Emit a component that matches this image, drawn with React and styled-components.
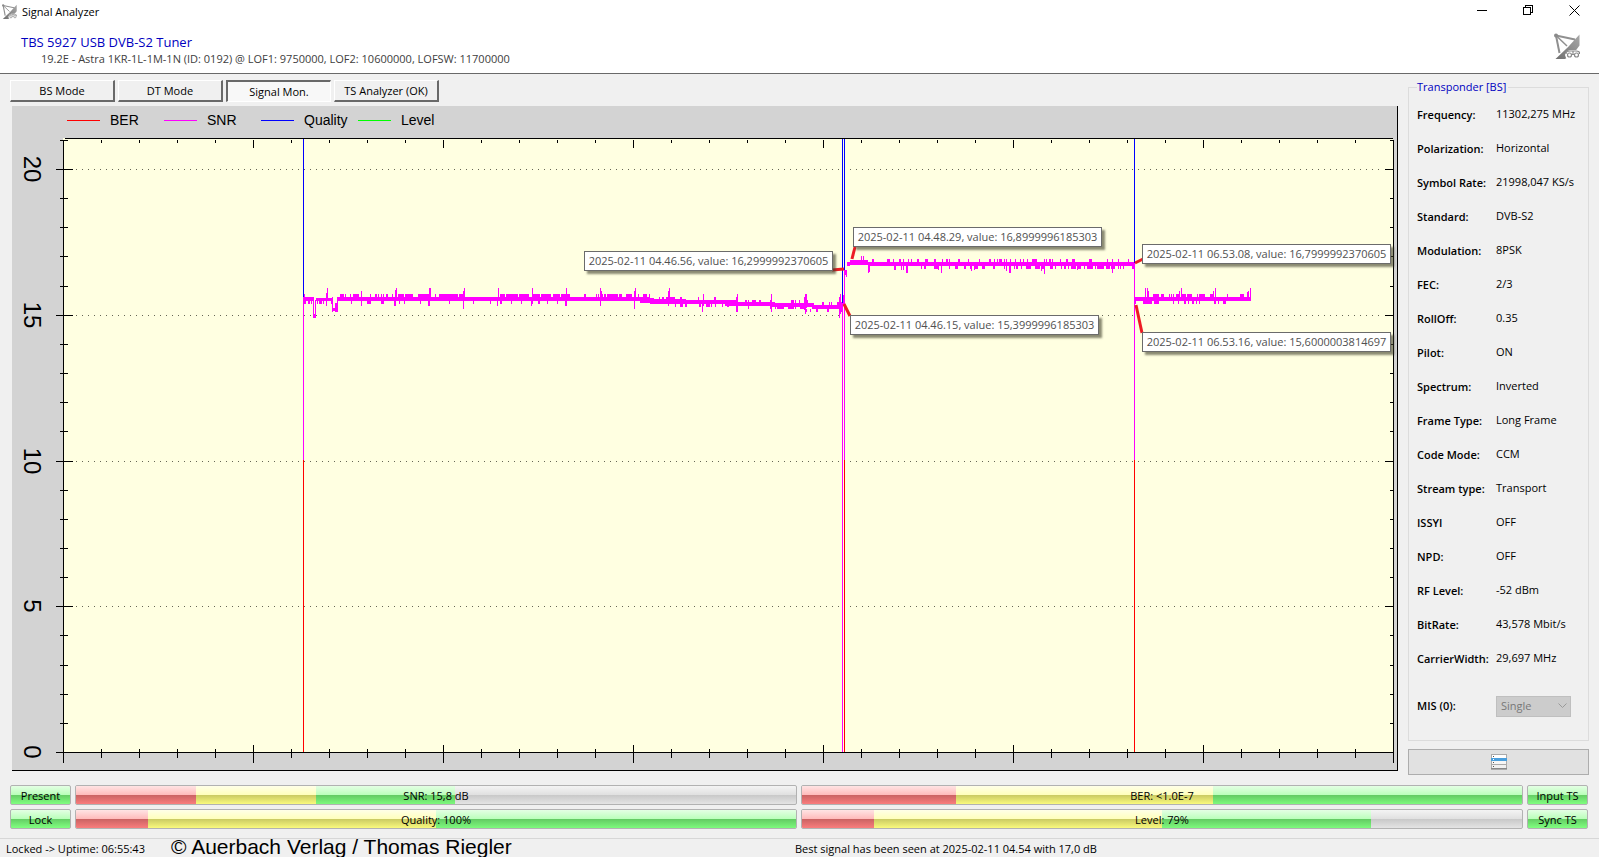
import React from "react";
import styled, { createGlobalStyle } from "styled-components";

const GlobalStyle = createGlobalStyle`
  *, *::before, *::after { box-sizing: border-box; }
  body {
    margin: 0;
    background: #f0f0f0;
    color: #000;
    font: 11px/14px "Open Sans", "Noto Sans", sans-serif;
  }
  button, select { font: inherit; color: inherit; }
`;

const Page = styled.div`
  display: flex;
  flex-direction: column;
  height: 100vh;
  min-height: 760px;
`;

/* ---------- header ---------- */

const Header = styled.header`
  flex: none;
  height: 74px;
  background: #fff;
  border-bottom: 1px solid #696969;
`;

const TitleBar = styled.div`
  display: flex;
  align-items: center;
  height: 22px;
  padding-left: 2px;
  gap: 5px;
`;

const WindowTitle = styled.span`
  flex: 1;
  padding-top: 1px;
`;

const WindowButton = styled.button`
  display: flex;
  align-items: center;
  justify-content: center;
  width: 46px;
  height: 20px;
  padding: 0;
  border: 0;
  background: none;
`;

const WindowButtons = styled.div`
  display: flex;
  align-self: flex-start;
  padding-right: 2px;
`;

const DeviceRow = styled.div`
  display: flex;
  justify-content: space-between;
  align-items: flex-start;
  padding: 11px 19px 0 21px;
`;

const DeviceName = styled.h1`
  margin: 0;
  color: #0000c0;
  font-size: 13px;
  line-height: 18px;
  font-weight: 500;
`;

const DeviceDetail = styled.p`
  margin: 0;
  padding-left: 20px;
  color: #404040;
  line-height: 16px;
`;

/* ---------- main area ---------- */

const Main = styled.main`
  display: flex;
  flex: 1;
  min-height: 0;
  gap: 10px;
  padding: 6px 10px 0;
`;

const MonitorColumn = styled.div`
  display: flex;
  flex-direction: column;
  flex: 1;
  min-width: 0;
  gap: 4px;
  padding-bottom: 4px;
`;

const Tabs = styled.nav`
  display: flex;
  gap: 3px;
`;

const Tab = styled.button`
  width: 105px;
  height: 22px;
  padding: 0;
  border-style: solid;
  border-width: ${(p) => (p.$active ? "2px 1px 1px 2px" : "1px 2px 2px 1px")};
  border-color: ${(p) => (p.$active ? "#696969 #fff #fff #696969" : "#fff #696969 #696969 #fff")};
  background: ${(p) => (p.$active ? "#f8f8f8" : "#f0f0f0")};
  line-height: 14px;
`;

const ChartPanel = styled.section`
  display: flex;
  flex-direction: column;
  flex: 1;
  min-height: 0;
  margin-left: 2px;
  border-right: 1px solid #000;
  border-bottom: 1px solid #000;
  background: #d3d3d3;
`;

const Legend = styled.ul`
  display: flex;
  flex: none;
  height: 28px;
  margin: 0;
  padding: 0 0 0 55px;
  list-style: none;
  font: 14px/28px "Liberation Sans", Arial, sans-serif;
`;

const LegendItem = styled.li`
  display: flex;
  align-items: center;
  gap: 10px;
  width: 97px;
  white-space: nowrap;
  &::before {
    content: "";
    width: 33px;
    height: 1px;
    background: ${(p) => p.$color};
  }
`;

const PlotArea = styled.div`
  position: relative;
  flex: 1;
  min-height: 0;
`;

const PlotSvg = styled.svg`
  display: block;
  width: 100%;
  height: 100%;
`;

const Callout = styled.div`
  position: absolute;
  height: 20px;
  width: 249px;
  border: 1px solid #6b6b6b;
  background: #fff;
  box-shadow: 3px 3px 2px rgba(60, 60, 40, 0.6);
  color: #505050;
  line-height: 17px;
  text-align: center;
  white-space: nowrap;
`;

/* ---------- transponder sidebar ---------- */

const Sidebar = styled.aside`
  display: flex;
  flex-direction: column;
  flex: none;
  gap: 8px;
  width: 181px;
`;

const Group = styled.fieldset`
  flex: 1;
  min-width: 0;
  margin: 0;
  padding: 4px 8px 0;
  border: 1px solid #dcdcdc;
`;

const GroupTitle = styled.legend`
  padding: 0 2px 0 0;
  color: #0000c0;
`;

const Facts = styled.dl`
  display: grid;
  grid-template-columns: 79px 1fr;
  grid-auto-rows: 34px;
  align-items: center;
  margin: 0;
  white-space: nowrap;
`;

const FactName = styled.dt`
  font-weight: 600;
`;

const FactValue = styled.dd`
  margin: 0;
  padding-bottom: 2px;
`;

const MisRow = styled.div`
  display: flex;
  align-items: center;
  height: 34px;
  margin-top: 13px;
`;

const MisLabel = styled.label`
  width: 79px;
  font-weight: 600;
`;

const SelectBox = styled.span`
  display: grid;
  align-items: center;
  svg { grid-area: 1 / 1; justify-self: end; margin-right: 4px; }
`;

const MisSelect = styled.select`
  grid-area: 1 / 1;
  width: 75px;
  height: 21px;
  padding: 0 4px;
  border: 1px solid #bfbfbf;
  border-radius: 0;
  appearance: none;
  background: #ccc;
  color: #787878;
  opacity: 1;
`;

const ListButton = styled.button`
  display: flex;
  align-items: center;
  justify-content: center;
  height: 26px;
  padding: 0;
  border: 1px solid #adadad;
  background: #e1e1e1;
`;

/* ---------- meters ---------- */

const glass = {
  red: "linear-gradient(#ffe4e4, #ffb8b8 50%, #cc6464 50%, #ff8080)",
  yellow: "linear-gradient(#ffffe8, #ffffb8 50%, #cccc64 50%, #ffff80)",
  green: "linear-gradient(#e4ffe4, #b8ffb8 50%, #64cc64 50%, #80ff80)",
  grey: "linear-gradient(#f4f4f4, #e0e0e0 50%, #c8c8c8 50%, #e4e4e4)",
};

const Meters = styled.section`
  display: grid;
  flex: none;
  grid-template-columns: 61px 1fr 1fr 61px;
  grid-auto-rows: 20px;
  gap: 4px;
  padding: 10px 11px 9px 10px;
`;

const Lamp = styled.output`
  display: block;
  border: 1px solid #b2b2b2;
  border-radius: 2px;
  background: ${glass.green};
  line-height: 19px;
  text-align: center;
`;

const Bar = styled.div`
  display: grid;
  border: 1px solid #b2b2b2;
  border-radius: 2px;
  background: ${glass.grey};
  overflow: hidden;
`;

const BarFill = styled.div`
  display: flex;
  grid-area: 1 / 1;
`;

const BarPart = styled.span`
  background: ${(p) => glass[p.$tone]};
`;

const BarText = styled.span`
  grid-area: 1 / 1;
  line-height: 19px;
  text-align: center;
`;

/* ---------- status bar ---------- */

const StatusBar = styled.footer`
  display: flex;
  align-items: flex-start;
  flex: none;
  height: 19px;
  border-top: 1px solid #d7d7d7;
  white-space: nowrap;
`;

const Uptime = styled.span`
  width: 166px;
  padding: 3px 0 0 6px;
`;

const Credit = styled.strong`
  width: 623px;
  padding-left: 5px;
  font: 21px/15px "Liberation Sans", Arial, sans-serif;
`;

const BestSignal = styled.span`
  padding: 3px 0 0 6px;
`;

/* ---------- icons ---------- */

function DishIcon({ size }) {
  return (
    <svg width={size} height={size} viewBox="0 0 26 26" aria-hidden="true">
      <defs>
        <linearGradient id={`dish${size}`} x1="0" y1="1" x2="1" y2="0">
          <stop offset="0" stopColor="#6f6f6f" />
          <stop offset="1" stopColor="#a8a8a8" />
        </linearGradient>
      </defs>
      <path d="M25.500 1.500v11Q20 21 11 26H1.500Q14 15 25.500 1.500z" fill={`url(#dish${size})`} />
      <g stroke="#909090" fill="none">
        <path d="M2 2.500L21 6.500" strokeWidth="2" />
        <path d="M2 2.500L5.500 20" strokeWidth="2" />
        <path d="M2 2.500L13 13" strokeWidth="1.500" />
      </g>
      <circle cx="2" cy="2.500" r="2" fill="#8a8a8a" />
      <path d="M11 22q1-4 5-5h6q4 0 4 4v4h-14z" fill="#fff" />
      <g fill="none" stroke="#8a8a8a" strokeWidth="1.200">
        <path d="M12 21q0-3 4-3h6q4 0 3.500 3" />
        <circle cx="15.500" cy="22" r="2" />
        <circle cx="22.500" cy="22" r="2" />
        <path d="M18 21.500h2M19 18v3" />
      </g>
    </svg>
  );
}

function ListIcon() {
  return (
    <svg width="16" height="16" viewBox="0 0 16 16" shapeRendering="crispEdges" aria-hidden="true">
      <rect x="0" y="0" width="16" height="16" fill="#aaa" />
      <rect x="1" y="1" width="14" height="3" fill="#fff" />
      <rect x="0" y="4" width="16" height="3" fill="#4a9fdd" />
      <rect x="1" y="7" width="14" height="3" fill="#f6f6f6" />
      <rect x="1" y="11" width="14" height="3" fill="#f0f0f0" />
      <rect x="0" y="14" width="16" height="1" fill="#888" />
      <path d="M2 2h1v1H2zM2 8h1v1H2zM2 12h1v1H2z" fill="#555" />
      <path d="M2 5h1v1H2z" fill="#fff" />
    </svg>
  );
}

/* ---------- chart ---------- */

// Drawing area of the plot, in chart units.
const VIEW = { x: 12, y: 134, w: 1385, h: 636 };
const LEFT = 63;
const RIGHT = 1393;
const TOP = 138;
const ZERO = 752;
const yOf = (value) => Math.round(ZERO - value * 29.15);

// Continuous parts of the SNR trace: x from, x to, top, bottom.
const bands = [
  [303, 313, 297, 301], [313, 316, 314, 318], [316, 333, 298, 301], [332, 338, 308, 311],
  [338, 650, 297, 301], [640, 654, 298, 303], [650, 686, 299, 304], [680, 737, 300, 304],
  [725, 775, 302, 306], [771, 814, 303, 307], [812, 843, 305, 309], [844, 847, 270, 275],
  [847, 850, 262, 266], [850, 868, 260, 265], [868, 1134, 262, 266], [1134, 1250, 297, 301],
];

// Irregular one-step jitter: x from, x to, top, bottom, share of columns hit.
const jitter = [
  [303, 312, 301, 304, 0.6], [316, 332, 301, 304, 0.5], [333, 338, 303, 312, 0.6],
  [340, 396, 294, 297, 0.18], [338, 560, 301, 304, 0.1], [397, 430, 294, 297, 0.8],
  [431, 439, 294, 297, 0.3], [439, 463, 294, 297, 0.85], [464, 500, 294, 297, 0.25],
  [500, 533, 294, 297, 0.75], [533, 566, 294, 297, 0.9], [567, 600, 294, 297, 0.1],
  [601, 634, 294, 297, 0.6], [635, 652, 294, 297, 0.2], [652, 690, 297, 300, 0.25],
  [675, 737, 304, 307, 0.3], [690, 737, 297, 300, 0.15], [738, 771, 300, 303, 0.2],
  [738, 771, 306, 309, 0.2], [773, 805, 306, 309, 0.5], [775, 812, 300, 303, 0.15],
  [806, 842, 302, 305, 0.25], [806, 842, 309, 312, 0.3], [868, 905, 266, 270, 0.25],
  [872, 1134, 259, 262, 0.25], [905, 972, 266, 269, 0.25], [972, 1010, 266, 269, 0.2],
  [1010, 1134, 266, 269, 0.6], [1134, 1152, 301, 304, 0.6], [1152, 1250, 294, 297, 0.32],
  [1152, 1235, 301, 304, 0.25],
];

// Single spikes: x, top, bottom.
const spikes = [
  [304, 294, 300], [313, 297, 318], [315, 300, 318], [326, 293, 306], [327, 288, 301],
  [332, 297, 312], [337, 297, 312], [361, 291, 306], [375, 294, 300], [376, 294, 300],
  [394, 297, 306], [395, 290, 306], [396, 288, 301], [428, 297, 306], [429, 288, 306],
  [430, 288, 300], [463, 291, 309], [464, 288, 300], [497, 297, 306], [498, 288, 300],
  [531, 297, 306], [532, 288, 304], [565, 297, 306], [566, 288, 306], [600, 288, 306],
  [601, 291, 300], [634, 291, 309], [635, 288, 300], [668, 291, 306], [669, 288, 304],
  [702, 300, 312], [703, 294, 306], [736, 297, 312], [737, 294, 312], [771, 294, 312],
  [770, 300, 309], [804, 297, 310], [805, 294, 314], [806, 294, 308], [839, 297, 318],
  [840, 294, 314], [843, 295, 306], [846, 270, 277], [861, 256, 262], [863, 256, 262],
  [868, 262, 273], [869, 262, 272], [903, 264, 270], [906, 264, 273], [907, 264, 273],
  [938, 264, 270], [941, 264, 273], [971, 264, 271], [974, 264, 270], [1006, 264, 271],
  [1009, 264, 273], [1010, 259, 273], [1041, 264, 271], [1044, 259, 274], [1077, 264, 270],
  [1112, 259, 273], [1145, 288, 300], [1147, 288, 300], [1148, 291, 300], [1179, 291, 300],
  [1181, 288, 300], [1213, 291, 300], [1215, 288, 300], [1218, 297, 304], [1247, 292, 300],
  [1248, 291, 300], [1250, 288, 301],
];

const column = (x, top, bottom) => `M${x} ${top}h1V${bottom}h-1z`;

function buildTrace() {
  let seed = 17;
  const random = () => {
    seed = (seed * 16807) % 2147483647;
    return seed / 2147483647;
  };
  let d = bands.map(([a, b, top, bottom]) => `M${a} ${top}H${b}V${bottom}H${a}z`).join("");
  jitter.forEach(([a, b, top, bottom, share]) => {
    let on = false;
    for (let x = a; x < b; x += 1) {
      if (random() < 0.7) on = random() < share;
      if (on) d += column(x, top, bottom);
    }
  });
  return d + spikes.map(([x, top, bottom]) => column(x, top, bottom)).join("");
}

const trace = buildTrace();

function buildTicks() {
  let d = "";
  for (let i = 0; i <= 35; i += 1) {
    const x = LEFT + i * 38;
    const major = i % 5 === 0;
    d += major ? `M${x} 744V762` : `M${x} 748V757`;
    if (i > 0 && i < 35) d += major ? `M${x} 139V147` : `M${x} 139V142`;
  }
  for (let v = 0; v <= 21; v += 1) {
    const y = yOf(v);
    const major = v % 5 === 0;
    d += major ? `M55 ${y}H72M1384 ${y}H1393` : `M59 ${y}H67M1389 ${y}H1393`;
  }
  return d;
}

const ticks = buildTicks();

// Vertical transitions between lock states: x, y from, y to, colour.
const transitions = [
  [303, 139, 300, "#0000ff"], [303, 300, 460, "#ff00ff"], [303, 460, 752, "#ff0000"],
  [842, 139, 303, "#0000ff"], [842, 303, 752, "#ff00ff"],
  [844, 139, 270, "#0000ff"], [844, 270, 460, "#ff00ff"], [844, 460, 752, "#ff0000"],
  [1134, 139, 263, "#0000ff"], [1134, 263, 460, "#ff00ff"], [1134, 460, 752, "#ff0000"],
];

const callouts = [
  { x: 584, y: 251, text: "2025-02-11 04.46.56, value: 16,2999992370605", line: "M832 270L844 269" },
  { x: 853, y: 227, text: "2025-02-11 04.48.29, value: 16,8999996185303", line: "M855 247L852 259" },
  { x: 850, y: 315, text: "2025-02-11 04.46.15, value: 15,3999996185303", line: "M844 304L850 316" },
  { x: 1142, y: 244, text: "2025-02-11 06.53.08, value: 16,7999992370605", line: "M1135 263L1143 259" },
  { x: 1142, y: 332, text: "2025-02-11 06.53.16, value: 15,6000003814697", line: "M1136 305L1142 333" },
];

function SignalChart() {
  return (
    <PlotArea>
      <PlotSvg
        viewBox={`${VIEW.x} ${VIEW.y} ${VIEW.w} ${VIEW.h}`}
        preserveAspectRatio="none"
        role="img"
        aria-label="Signal history"
      >
        <rect x={LEFT} y={TOP} width={RIGHT - LEFT} height={ZERO - TOP} fill="#ffffe1" />
        <g shapeRendering="crispEdges">
          {[5, 10, 15, 20].map((v) => (
            <path
              key={v}
              d={`M76 ${yOf(v)}.5H1384`}
              stroke="#666655"
              strokeDasharray="1 5"
            />
          ))}
          {transitions.map(([x, a, b, color]) => (
            <rect key={`${x}-${a}`} x={x} y={a} width="1" height={b - a} fill={color} />
          ))}
          <path d={trace} fill="#ff00ff" />
          <g transform="translate(0.5 0.5)" stroke="#000" fill="none">
            <path d={`M64 ${TOP}H1392M${LEFT} 139V762M${RIGHT} 139V762M${LEFT} ${ZERO}H${RIGHT}`} />
            <path d={ticks} />
          </g>
        </g>
        <g stroke="#ed1c24" strokeWidth="3">
          {callouts.map((c) => (
            <path key={c.line} d={c.line} />
          ))}
        </g>
        <g fontFamily="Liberation Sans, Arial, sans-serif" fontSize="24" textAnchor="middle">
          {[0, 5, 10, 15, 20].map((v) => (
            <text key={v} transform={`translate(24 ${yOf(v)}) rotate(90)`}>
              {v}
            </text>
          ))}
        </g>
      </PlotSvg>
      {callouts.map((c) => (
        <Callout
          key={c.text}
          style={{
            left: `${((c.x - VIEW.x) / VIEW.w) * 100}%`,
            top: `${((c.y - VIEW.y) / VIEW.h) * 100}%`,
          }}
        >
          {c.text}
        </Callout>
      ))}
    </PlotArea>
  );
}

/* ---------- data ---------- */

const series = [
  ["BER", "#ff0000"],
  ["SNR", "#ff00ff"],
  ["Quality", "#0000ff"],
  ["Level", "#00ff00"],
];

const facts = [
  ["Frequency:", "11302,275 MHz"],
  ["Polarization:", "Horizontal"],
  ["Symbol Rate:", "21998,047 KS/s"],
  ["Standard:", "DVB-S2"],
  ["Modulation:", "8PSK"],
  ["FEC:", "2/3"],
  ["RollOff:", "0.35"],
  ["Pilot:", "ON"],
  ["Spectrum:", "Inverted"],
  ["Frame Type:", "Long Frame"],
  ["Code Mode:", "CCM"],
  ["Stream type:", "Transport"],
  ["ISSYI", "OFF"],
  ["NPD:", "OFF"],
  ["RF Level:", "-52 dBm"],
  ["BitRate:", "43,578 Mbit/s"],
  ["CarrierWidth:", "29,697 MHz"],
];

function Meter({ text, red, yellow, green }) {
  return (
    <Bar role="meter" aria-label={text} aria-valuemin={0} aria-valuemax={100} aria-valuenow={red + yellow + green}>
      <BarFill>
        <BarPart $tone="red" style={{ width: `${red}%` }} />
        <BarPart $tone="yellow" style={{ width: `${yellow}%` }} />
        <BarPart $tone="green" style={{ width: `${green}%` }} />
      </BarFill>
      <BarText>{text}</BarText>
    </Bar>
  );
}

export default function App() {
  return (
    <Page>
      <GlobalStyle />
      <Header>
        <TitleBar>
          <DishIcon size={15} />
          <WindowTitle>Signal Analyzer</WindowTitle>
          <WindowButtons>
            <WindowButton aria-label="Minimize">
              <svg width="10" height="10" shapeRendering="crispEdges"><path d="M0 5h10v1H0z" /></svg>
            </WindowButton>
            <WindowButton aria-label="Restore">
              <svg width="10" height="10" fill="none" stroke="#000" shapeRendering="crispEdges">
                <path d="M.5 2.500h7v7h-7zM2.500 2.500v-2h7v7h-2" />
              </svg>
            </WindowButton>
            <WindowButton aria-label="Close">
              <svg width="11" height="11" fill="none" stroke="#000"><path d="M.5.5l10 10M10.500.5l-10 10" /></svg>
            </WindowButton>
          </WindowButtons>
        </TitleBar>
        <DeviceRow>
          <div>
            <DeviceName>TBS 5927 USB DVB-S2 Tuner</DeviceName>
            <DeviceDetail>
              19.2E - Astra 1KR-1L-1M-1N (ID: 0192) @ LOF1: 9750000, LOF2: 10600000, LOFSW: 11700000
            </DeviceDetail>
          </div>
          <DishIcon size={26} />
        </DeviceRow>
      </Header>

      <Main>
        <MonitorColumn>
          <Tabs>
            <Tab>BS Mode</Tab>
            <Tab>DT Mode</Tab>
            <Tab $active aria-pressed="true">Signal Mon.</Tab>
            <Tab>TS Analyzer (OK)</Tab>
          </Tabs>
          <ChartPanel>
            <Legend>
              {series.map(([name, color]) => (
                <LegendItem key={name} $color={color}>{name}</LegendItem>
              ))}
            </Legend>
            <SignalChart />
          </ChartPanel>
        </MonitorColumn>

        <Sidebar>
          <Group>
            <GroupTitle>Transponder [BS]</GroupTitle>
            <Facts>
              {facts.map(([name, value]) => (
                <React.Fragment key={name}>
                  <FactName>{name}</FactName>
                  <FactValue>{value}</FactValue>
                </React.Fragment>
              ))}
            </Facts>
            <MisRow>
              <MisLabel htmlFor="mis">MIS (0):</MisLabel>
              <SelectBox>
                <MisSelect id="mis" disabled defaultValue="Single">
                  <option>Single</option>
                </MisSelect>
                <svg width="9" height="6" fill="none" stroke="#9a9a9a" aria-hidden="true">
                  <path d="M.5.5l4 4 4-4" />
                </svg>
              </SelectBox>
            </MisRow>
          </Group>
          <ListButton aria-label="Transponder list">
            <ListIcon />
          </ListButton>
        </Sidebar>
      </Main>

      <Meters>
        <Lamp>Present</Lamp>
        <Meter text="SNR: 15,8 dB" red={16.7} yellow={16.7} green={19.3} />
        <Meter text="BER: <1.0E-7" red={21.4} yellow={35.7} green={42.9} />
        <Lamp>Input TS</Lamp>
        <Lamp>Lock</Lamp>
        <Meter text="Quality: 100%" red={10} yellow={40} green={50} />
        <Meter text="Level: 79%" red={10} yellow={40} green={29} />
        <Lamp>Sync TS</Lamp>
      </Meters>

      <StatusBar>
        <Uptime>{"Locked -> Uptime: 06:55:43"}</Uptime>
        <Credit>© Auerbach Verlag / Thomas Riegler</Credit>
        <BestSignal>Best signal has been seen at 2025-02-11 04.54 with 17,0 dB</BestSignal>
      </StatusBar>
    </Page>
  );
}
